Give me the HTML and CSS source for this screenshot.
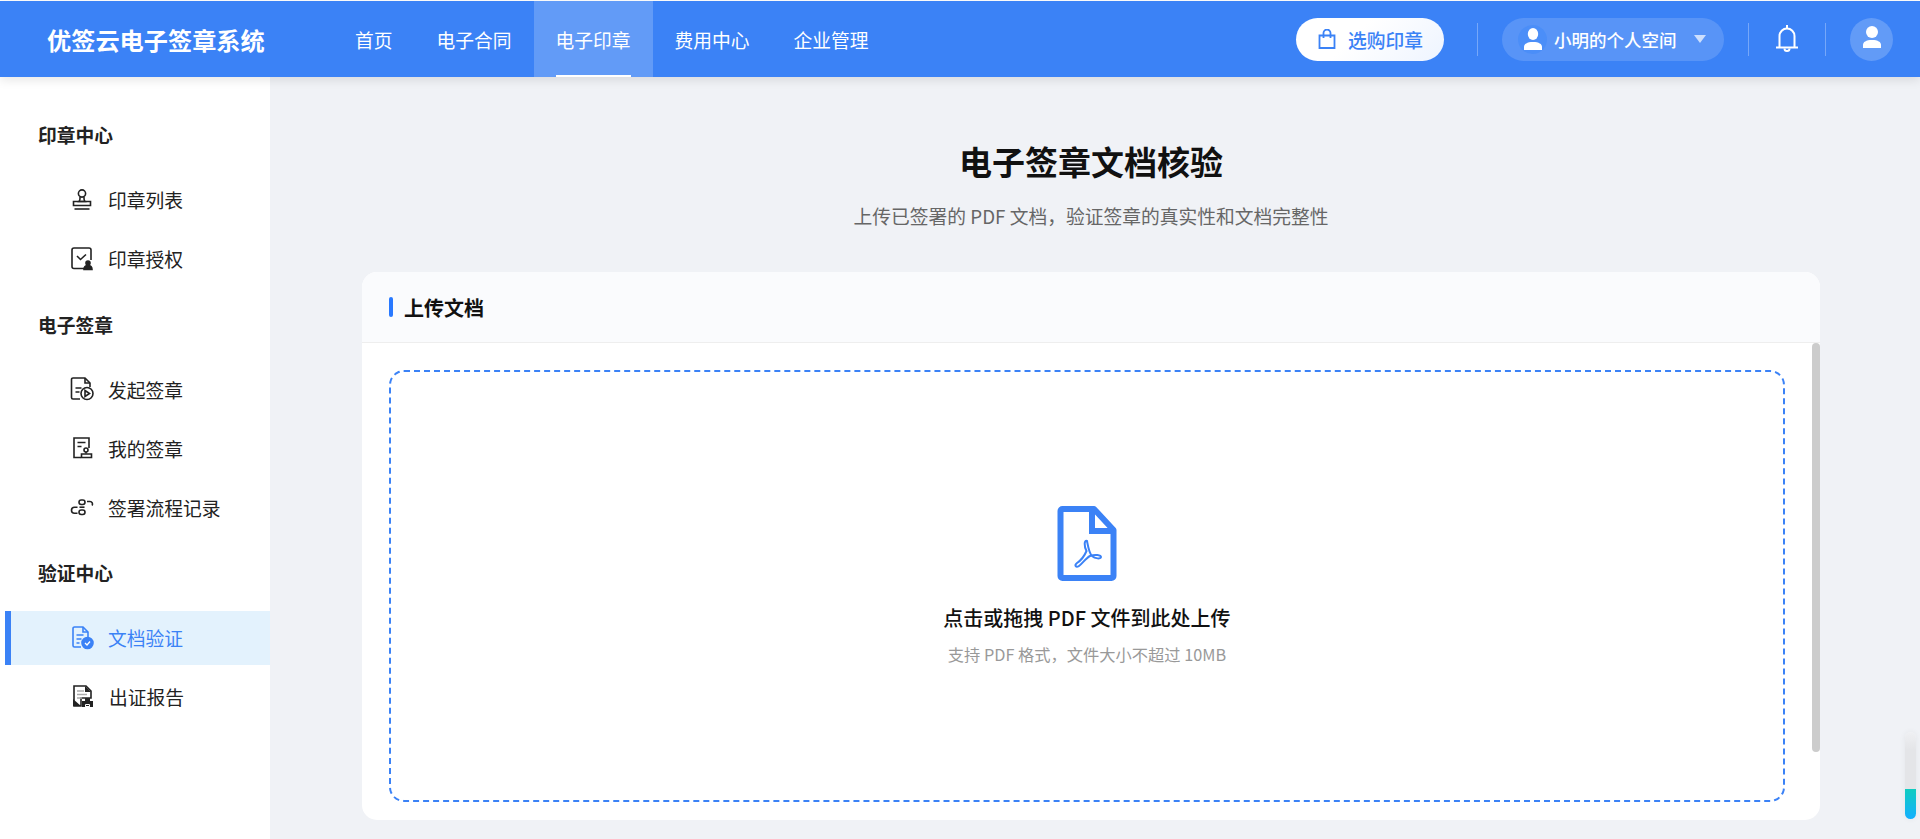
FILE: index.html
```html
<!DOCTYPE html>
<html lang="zh-CN">
<head>
  <meta charset="UTF-8">
  <title>优签云电子签章系统</title>
  <link rel="stylesheet" href="styles.css">
</head>
<body>
  <header class="topbar">
    <div class="logo">优签云电子签章系统</div>
    <nav class="topnav">
      <a class="topnav-item">首页</a>
      <a class="topnav-item">电子合同</a>
      <a class="topnav-item active">电子印章</a>
      <a class="topnav-item">费用中心</a>
      <a class="topnav-item">企业管理</a>
    </nav>
    <div class="topbar-right">
      <button class="buy-btn">
        <svg width="18" height="20" viewBox="0 0 18 20" fill="none" stroke="#3b82f6" stroke-width="1.8"><path d="M1.5 6.5h15v12.5h-15z"/><path d="M5.5 9V4a3.5 3.5 0 0 1 7 0v5"/></svg>
        选购印章
      </button>
      <span class="divider"></span>
      <div class="space-pill">
        <span class="space-avatar">
          <svg width="20" height="22" viewBox="0 0 20 22" fill="#fff"><ellipse cx="10" cy="6" rx="5.2" ry="6"/><path d="M1 22v-3c0-3 3-5 9-5s9 2 9 5v3z"/></svg>
        </span>
        <span class="space-name">小明的个人空间</span>
        <span class="caret"></span>
      </div>
      <span class="divider"></span>
      <div class="bell">
        <svg width="22" height="28" viewBox="0 0 22 28" fill="none" stroke="#fff" stroke-width="2"><path d="M11 0v3.500"/><path d="M3.500 22V11a7.500 7.500 0 0 1 15 0v11"/><path d="M0 22.500h22"/><path d="M8.500 23.500a2.500 2.500 0 0 0 5 0"/></svg>
      </div>
      <span class="divider"></span>
      <div class="user-avatar">
        <svg width="20" height="22" viewBox="0 0 20 22" fill="#fff"><ellipse cx="10" cy="6" rx="6" ry="6"/><path d="M1 22v-3c0-3 3-5 9-5s9 2 9 5v3z"/></svg>
      </div>
    </div>
  </header>

  <div class="layout">
    <aside class="sidebar">
      <h3 class="side-title">印章中心</h3>
      <a class="side-item">
        <svg class="side-icon" viewBox="0 0 24 24" fill="none" stroke="#222" stroke-width="1.6"><circle cx="12" cy="5.5" r="3.6"/><path d="M10 9c0 2 .3 3-1 4.5h6c-1.300-1.500-1-2.500-1-4.500"/><path d="M3.500 13.500h17v4h-17z"/><path d="M4.500 21h15"/></svg>
        印章列表
      </a>
      <a class="side-item">
        <svg class="side-icon" viewBox="0 0 24 24" fill="none" stroke="#222" stroke-width="1.6"><path d="M14 21.500H4a2 2 0 0 1-2-2V3a2 2 0 0 1 2-2h15a2 2 0 0 1 2 2v10"/><path d="M7 9l3.500 3.500L16 7.500"/><circle cx="18" cy="16" r="2" fill="#222"/><path d="M14 22.500c0-3 1.500-4 4-4s4 1 4 4z" fill="#222"/></svg>
        印章授权
      </a>

      <h3 class="side-title">电子签章</h3>
      <a class="side-item">
        <svg class="side-icon" viewBox="0 0 24 24" fill="none" stroke="#222" stroke-width="1.600"><path d="M10 22H3a1.500 1.500 0 0 1-1.500-1.500v-18A1.500 1.500 0 0 1 3 1h12l5 5v4"/><path d="M15 1v5h5" /><path d="M5.500 11h6M5.500 15h4"/><circle cx="17" cy="16.500" r="6"/><path d="M15 13.500l4.500 3-4.500 3z"/></svg>
        发起签章
      </a>
      <a class="side-item">
        <svg class="side-icon" viewBox="0 0 24 24" fill="none" stroke="#222" stroke-width="1.600"><path d="M11 21.500H4V2h15v10"/><path d="M7.500 6.500h8M7.500 10.500h4"/><circle cx="16" cy="14" r="2"/><path d="M16 16v1.500"/><path d="M11.500 18h10v3.500h-10z"/></svg>
        我的签章
      </a>
      <a class="side-item">
        <svg class="side-icon" viewBox="0 0 24 24" fill="none" stroke="#222" stroke-width="1.600"><rect x="9" y="5" width="6" height="4.500" rx="2.200"/><rect x="9" y="15" width="6" height="4.500" rx="2.200"/><path d="M9.500 12.200h5"/><path d="M7.500 12.200H4.500a3 3 0 0 0 0 6h3"/><path d="M17 6.500h3a2.500 2.500 0 0 1 2 4"/></svg>
        签署流程记录
      </a>

      <h3 class="side-title">验证中心</h3>
      <a class="side-item active">
        <svg class="side-icon" viewBox="0 0 24 24" fill="none" stroke="#3b82f6" stroke-width="1.600"><path d="M11 21H4.500A1.500 1.500 0 0 1 3 19.500v-17A1.500 1.500 0 0 1 4.500 1H13l5 5v6"/><path d="M13 1v5h5"/><path d="M6.500 9h7M6.500 13h5M6.500 17h3"/><circle cx="17.500" cy="17" r="5.500" fill="#3b82f6"/><path d="M15 17l2 2 3-3.500" stroke="#fff" stroke-width="1.300"/></svg>
        文档验证
      </a>
      <a class="side-item report">
        <svg class="side-icon" viewBox="0 0 24 24"><path d="M4 1h12l5 5v7H11v8H4z" fill="#fff" stroke="#222" stroke-width="1.600"/><path d="M3 14v7h8z" fill="#222"/><path d="M15 1v6h6z" fill="#222"/><path d="M7 6h7M7 9.500h10M7 13h5" stroke="#aaa" stroke-width="1.500"/><path d="M15 13h5v3h3v6h-3v-2h-5v2h-3v-6h3z" fill="#222"/><path d="M15.500 19.500h4v2h-4z" fill="#222" stroke="#fff"/></svg>
        出证报告
      </a>
    </aside>

    <main class="main">
      <h1 class="page-title">电子签章文档核验</h1>
      <p class="page-sub">上传已签署的 PDF 文档，验证签章的真实性和文档完整性</p>

      <section class="card">
        <div class="card-head"><span class="card-head-bar"></span>上传文档</div>
        <div class="card-body">
          <div class="dropzone">
            <svg class="pdf-icon" width="60" height="75" viewBox="0 0 60 75" fill="none" stroke="#3b82f6"><path d="M3.500 5a2 2 0 0 1 2-2H37l19.500 21v46a2 2 0 0 1-2 2h-49a2 2 0 0 1-2-2z" stroke-width="6" stroke-linejoin="round"/><path d="M35 3v22h21" stroke-width="6"/><path d="M30 35C27 34 27 40 29.500 45 27 51 23 55 20 57 17 59.500 19 62 22 60 25 58 29 52 33 50 38 48 44 49 44 51 44 53 38 53 35 50 32 47 31 40 30 35Z" stroke-width="2"/></svg>
            <div class="drop-title">点击或拖拽 PDF 文件到此处上传</div>
            <div class="drop-hint">支持 PDF 格式，文件大小不超过 10MB</div>
          </div>
          <div class="scroll-thumb"></div>
        </div>
      </section>
    </main>
  </div>

  <div class="progress-widget"><div class="progress-fill"></div></div>
</body>
</html>
```

FILE: styles.css
```css
* {
  box-sizing: border-box;
}
html, body {
  height: 100%;
}
body {
  margin: 0;
  padding-top: 1px;
  overflow: hidden;
  display: flex;
  flex-direction: column;
  font-family: "Noto Sans CJK SC", "Liberation Sans", sans-serif;
  color: #222;
  background-color: #fff;
}

/* top bar */
.topbar {
  position: relative;
  z-index: 2;
  display: flex;
  align-items: center;
  flex: none;
  height: 76px;
  padding: 0 27px 0 47px;
  background-color: #3b82f6;
  color: #fff;
  box-shadow: 0 3px 10px rgba(0, 0, 0, 0.1);
}
.logo {
  width: 286px;
  font-size: 24.2px;
  font-weight: 700;
  white-space: nowrap;
}
.topnav {
  display: flex;
  height: 100%;
}
.topnav-item {
  position: relative;
  display: flex;
  align-items: center;
  padding: 0 22px;
  font-size: 18.75px;
}
.topnav-item.active {
  background-color: rgba(255, 255, 255, 0.2);
}
.topnav-item.active::after {
  content: "";
  position: absolute;
  left: 22px;
  right: 22px;
  bottom: 0;
  height: 2px;
  background-color: #fff;
}
.topbar-right {
  display: flex;
  align-items: center;
  gap: 24px;
  margin-left: auto;
}
.buy-btn {
  display: flex;
  align-items: center;
  gap: 12px;
  height: 43px;
  width: 148px;
  margin-right: 9px;
  padding: 0 0 0 22px;
  border: none;
  border-radius: 22px;
  background: linear-gradient(135deg, #fff 40%, #eef4ff);
  color: #3b82f6;
  font-family: inherit;
  font-size: 18.75px;
  font-weight: 500;
  white-space: nowrap;
}
.divider {
  width: 1px;
  height: 33px;
  background-color: rgba(255, 255, 255, 0.3);
}
.space-pill {
  display: flex;
  align-items: center;
  width: 222px;
  height: 43px;
  padding-left: 16px;
  border-radius: 22px;
  background-color: rgba(255, 255, 255, 0.15);
}
.space-avatar {
  display: flex;
  align-items: center;
  justify-content: center;
  width: 29px;
  height: 29px;
  border-radius: 50%;
  background-color: #4b8ef8;
}
.space-name {
  margin-left: 7px;
  font-size: 17.5px;
  font-weight: 500;
  white-space: nowrap;
}
.caret {
  width: 0;
  height: 0;
  margin-left: 17px;
  border-left: 6px solid transparent;
  border-right: 6px solid transparent;
  border-top: 8px solid rgba(255, 255, 255, 0.7);
}
.bell {
  display: flex;
  justify-content: center;
  width: 28px;
}
.user-avatar {
  display: flex;
  align-items: center;
  justify-content: center;
  width: 43px;
  height: 43px;
  padding-bottom: 4px;
  border-radius: 50%;
  background-color: rgba(255, 255, 255, 0.2);
}

/* layout */
.layout {
  display: flex;
  flex: 1;
  min-height: 0;
}
.sidebar {
  flex: none;
  width: 270px;
  padding: 45px 0 0 5px;
  background-color: #fff;
  box-shadow: 1px 0 4px rgba(0, 0, 0, 0.04);
}
.side-title {
  height: 26px;
  margin: 25.5px 0 25px 33px;
  font-size: 18.75px;
  line-height: 26px;
  font-weight: 700;
}
.side-title:first-child {
  margin-top: 0;
}
.side-item {
  display: flex;
  align-items: center;
  gap: 14px;
  height: 54px;
  margin-bottom: 5px;
  padding: 0 0 1px 65px;
  font-size: 18.75px;
}
.side-item.active {
  padding-left: 59px;
  border-left: 6px solid #3b82f6;
  background-color: #e3f2fd;
  color: #3b82f6;
}
.side-item.report {
  gap: 15px;
}
.side-icon {
  flex: none;
  width: 24px;
  height: 24px;
}

/* main */
.main {
  flex: 1;
  min-width: 0;
  padding: 0 100px 19px 92px;
  display: flex;
  flex-direction: column;
  background-color: #f0f2f6;
}
.page-title {
  margin: 62px 0 0;
  font-size: 33px;
  line-height: 44px;
  font-weight: 700;
  text-align: center;
  color: #111;
}
.page-sub {
  margin: 19px 0 0;
  font-size: 18.75px;
  line-height: 28px;
  text-align: center;
  color: #666;
}
.card {
  display: flex;
  flex-direction: column;
  flex: 1;
  min-height: 0;
  margin-top: 42px;
  border-radius: 15px;
  overflow: hidden;
  background-color: #fff;
}
.card-head {
  display: flex;
  align-items: center;
  gap: 11px;
  flex: none;
  height: 71px;
  padding-left: 27px;
  border-bottom: 1px solid #eee;
  background-color: #fafbfd;
  font-size: 20px;
  font-weight: 700;
  color: #111;
}
.card-head-bar {
  width: 4px;
  height: 20px;
  border-radius: 2px;
  background-color: #2979ff;
}
.card-body {
  position: relative;
  flex: 1;
  min-height: 0;
  padding: 27px 35px 0 27px;
}
.scroll-thumb {
  position: absolute;
  top: 0;
  right: 0;
  width: 8px;
  height: 409px;
  border-radius: 4px;
  background-color: #ccc;
}
.dropzone {
  display: flex;
  flex-direction: column;
  align-items: center;
  justify-content: center;
  height: 432px;
  padding-bottom: 1px;
  border: 2px dashed #3b82f6;
  border-radius: 15px;
}
.drop-title {
  margin-top: 23px;
  font-size: 20px;
  line-height: 28px;
  font-weight: 500;
  color: #111;
}
.drop-hint {
  margin-top: 11px;
  font-size: 16.25px;
  line-height: 22px;
  color: #999;
}

/* small level meter, bottom right */
.progress-widget {
  position: fixed;
  right: 4px;
  top: 732px;
  width: 11px;
  height: 87px;
  border-radius: 6px;
  overflow: hidden;
  background: linear-gradient(#eff0f3, #e4e5e8 20%);
  box-shadow: 0 0 6px rgba(0, 0, 0, 0.06);
}
.progress-fill {
  margin-top: 57px;
  height: 30px;
  background: linear-gradient(#10ccc0, #14b0ff);
}
```
